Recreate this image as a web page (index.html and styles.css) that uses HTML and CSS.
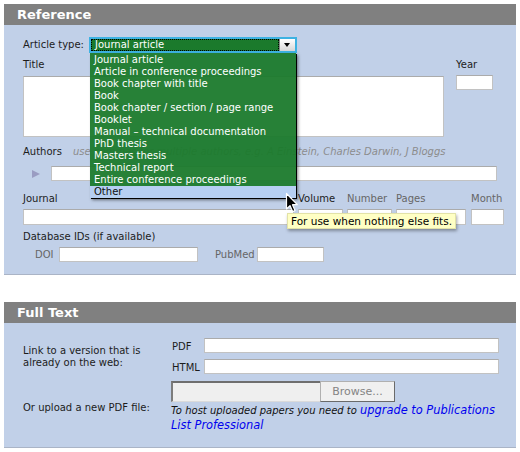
FILE: index.html
```html
<!DOCTYPE html>
<html>
<head>
<meta charset="utf-8">
<link rel="stylesheet" href="styles.css">
</head>
<body>
<div class="panel">
  <div class="phead">Reference</div>
  <div class="pbody ref-body">
    <div class="r-type">
      <span class="lbl type-lbl">Article type:</span>
      <div class="select-wrap">
        <div class="select"><span class="sel-text">Journal article</span><span class="sel-btn"></span></div>
        <ul class="menu">
          <li>Journal article</li>
          <li>Article in conference proceedings</li>
          <li>Book chapter with title</li>
          <li>Book</li>
          <li>Book chapter / section / page range</li>
          <li>Booklet</li>
          <li>Manual – technical documentation</li>
          <li>PhD thesis</li>
          <li>Masters thesis</li>
          <li>Technical report</li>
          <li>Entire conference proceedings</li>
          <li class="hl">Other</li>
        </ul>
      </div>
    </div>
    <div class="r-title">
      <div class="col c-title"><span class="lbl">Title</span><div class="inp ta"></div></div>
      <div class="col c-year"><span class="lbl">Year</span><div class="inp year"></div></div>
    </div>
    <div class="r-alabel"><span class="lbl a-lbl">Authors</span><span class="hint">use commas for multiple authors, e.g. A Einstein, Charles Darwin, J Bloggs</span></div>
    <div class="r-authors"><span class="tri"></span><div class="inp author"></div></div>
    <div class="r-journal">
      <div class="jc jc-journal"><span class="lbl">Journal</span><div class="inp"></div></div>
      <div class="jc jc-vol"><span class="lbl">Volume</span><div class="inp"></div></div>
      <div class="jc jc-num"><span class="lbl dim">Number</span><div class="inp"></div></div>
      <div class="jc jc-pages"><span class="lbl dim">Pages</span><div class="inp"></div></div>
      <div class="jc jc-month"><span class="lbl dim">Month</span><div class="inp"></div></div>
    </div>
    <div class="r-db lbl">Database IDs (if available)</div>
    <div class="r-doi">
      <span class="lbl dim doi-lbl">DOI</span><div class="inp doi"></div>
      <span class="lbl dim pm-lbl">PubMed</span><div class="inp pm"></div>
    </div>
  </div>
</div>

<div class="panel">
  <div class="phead">Full Text</div>
  <div class="pbody ft-body">
    <div class="ft-grid">
      <div class="ft-lbl1">Link to a version that is already on the web:</div>
      <div class="url-rows">
        <div class="url-row"><span>PDF</span><div class="inp"></div></div>
        <div class="url-row"><span>HTML</span><div class="inp"></div></div>
      </div>
      <div class="ft-lbl2">Or upload a new PDF file:</div>
      <div class="upload">
        <div class="file"><div class="file-field"></div><div class="browse">Browse...</div></div>
        <div class="note">To host uploaded papers you need to <a href="#">upgrade to Publications List Professional</a></div>
      </div>
    </div>
  </div>
</div>

<div class="tip">For use when nothing else fits.</div>
<svg class="cursor" width="14" height="22" viewBox="0 0 14 22"><path d="M1.5 1.5 L1.5 17 L5 13.6 L7.6 19.6 L10 18.6 L7.5 12.7 L12.3 12.7 Z" fill="#000" stroke="#fff" stroke-width="1.2" stroke-linejoin="round"/></svg>
</body>
</html>
```
FILE: styles.css
```css
body {
  margin: 0;
  width: 520px;
  height: 452px;
  overflow: hidden;
  position: relative;
  background: #fff;
  font-family: "DejaVu Sans", Verdana, sans-serif;
  font-size: 10px;
  line-height: 12px;
  color: #1c1c1c;
}
.panel { margin: 4px 4px 0; width: 512px; }
.panel + .panel { margin-top: 27px; }
.phead {
  height: 21px;
  background: #808080;
  color: #fff;
  font-weight: bold;
  font-size: 13px;
  line-height: 21px;
  padding-left: 13px;
}
.pbody {
  background: #c1d0e8;
  border-bottom: 1px solid #aab4c6;
  box-sizing: border-box;
}
.ref-body { height: 250px; padding: 12px 0 0 19px; }
.ft-body { height: 125px; padding: 15px 17px 0 19px; }

.inp {
  box-sizing: border-box;
  background: #fff;
  border: 1px solid #c2c2c2;
  border-top-color: #ababab;
}
.lbl { white-space: nowrap; }
.dim { color: #666; }

/* Article type row */
.r-type { display: flex; align-items: center; height: 16px; }
.type-lbl { width: 66px; }
.select-wrap { position: relative; width: 208px; height: 16px; }
.select {
  box-sizing: border-box;
  height: 16px;
  border: 2px solid #3db2e2;
  background: #1b7a2c;
  display: flex;
}
.sel-text {
  flex: 1;
  border: 1px dotted #000;
  color: #fff;
  padding-left: 3px;
  line-height: 10px;
}
.sel-btn {
  width: 15px;
  background: linear-gradient(#ffffff, #d6d6d6);
  border-left: 1px solid #8a8a8a;
  position: relative;
}
.sel-btn::after {
  content: "";
  position: absolute;
  left: 4px;
  top: 4px;
  border-top: 4px solid #000;
  border-left: 3.5px solid transparent;
  border-right: 3.5px solid transparent;
}
.menu {
  position: absolute;
  left: 1px;
  top: 16px;
  width: 206px;
  margin: 0;
  padding: 1px 0 0;
  list-style: none;
  background: rgba(27, 122, 44, 0.95);
  box-shadow: 1px 1px 0 #000, 2px 2px 3px rgba(0, 0, 0, 0.5);
  z-index: 5;
}
.menu li {
  height: 12px;
  line-height: 12px;
  padding-left: 4px;
  color: #fff;
  white-space: nowrap;
}
.menu li.hl { background: #b6cff2; color: #111; }

/* Title / Year */
.r-title { display: flex; gap: 12px; margin-top: 6px; }
.col { display: flex; flex-direction: column; }
.c-title { width: 421px; }
.c-title .lbl { margin-bottom: 5px; }
.ta { height: 61px; }
.c-year { width: 37px; }
.c-year .lbl { margin-bottom: 4px; }
.year { height: 15px; }

/* Authors */
.r-alabel { display: flex; margin-top: 9px; height: 12px; white-space: nowrap; }
.a-lbl { width: 50px; }
.hint { color: #8c8c8c; font-style: italic; }
.r-authors { display: flex; align-items: center; height: 15px; margin-top: 8px; }
.tri {
  width: 0;
  height: 0;
  margin-left: 9px;
  margin-right: 11px;
  border-left: 8px solid #9a9cc2;
  border-top: 4.5px solid transparent;
  border-bottom: 4.5px solid transparent;
}
.author { width: 446px; height: 15px; }

/* Journal row */
.r-journal { display: flex; margin-top: 12px; }
.jc { display: flex; flex-direction: column; gap: 4px; }
.jc .inp { height: 16px; }
.jc-journal { width: 271px; margin-right: 4px; }
.jc-vol { width: 45px; margin-right: 4px; }
.jc-num { width: 45px; margin-right: 4px; }
.jc-pages { width: 70px; margin-right: 5px; }
.jc-month { width: 33px; }

.r-db { margin-top: 6px; }
.r-doi { display: flex; align-items: center; height: 15px; margin-top: 4px; }
.doi-lbl { margin-left: 12px; width: 24px; }
.doi { width: 139px; height: 15px; }
.pm-lbl { margin-left: 17px; width: 42px; }
.pm { width: 67px; height: 15px; }

/* Full text */
.ft-grid { display: grid; grid-template-columns: 148px 1fr; }
.ft-lbl1 { margin-top: 7px; padding-right: 10px; }
.url-rows { display: flex; flex-direction: column; gap: 6px; }
.url-row { display: flex; height: 15px; }
.url-row span { width: 33px; line-height: 15px; padding-left: 1px; box-sizing: border-box; padding-top: 1px; }
.url-row .inp { flex: 1; }
.ft-lbl2 { margin-top: 28px; }
.upload { margin-top: 7px; }
.file { display: flex; height: 21px; }
.file-field {
  box-sizing: border-box;
  width: 149px;
  background: #efefef;
  border-top: 2px solid #6e6e6e;
  border-left: 2px solid #7c7c7c;
  border-bottom: 1px solid #dadada;
}
.browse {
  box-sizing: border-box;
  width: 75px;
  background: #f0f0f0;
  border: 1px solid #b0b0b0;
  border-right-color: #6a6a6a;
  border-bottom-color: #6a6a6a;
  color: #848484;
  font-size: 11px;
  line-height: 19px;
  text-align: center;
}
.note {
  margin-top: 1px;
  margin-right: -6px;
  font-style: italic;
  font-size: 10px;
  line-height: 14px;
  color: #111;
}
.note a { color: #0000ee; font-size: 11.4px; text-decoration: none; }

/* overlays */
.tip {
  position: absolute;
  left: 287px;
  top: 213px;
  width: 169px;
  height: 16px;
  box-sizing: border-box;
  background: #ffffc4;
  border: 1px solid #e2e2a8;
  box-shadow: 1px 2px 3px rgba(0, 0, 0, 0.35);
  font-size: 10.5px;
  line-height: 14px;
  padding-left: 3px;
  color: #000;
  white-space: nowrap;
  z-index: 6;
}
.cursor { position: absolute; left: 285px; top: 192px; z-index: 7; }
```
